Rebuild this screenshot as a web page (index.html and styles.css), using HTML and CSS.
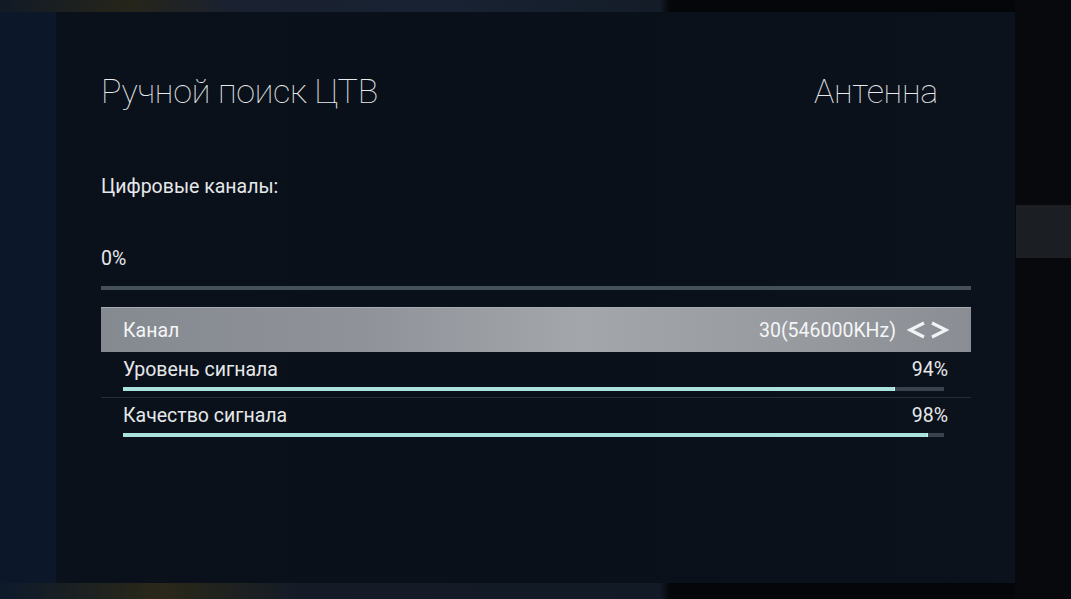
FILE: index.html
```html
<!DOCTYPE html>
<html lang="ru">
<head>
    <meta charset="UTF-8">
    <meta name="viewport" content="width=device-width, initial-scale=1.0">
    <title>Ручной поиск ЦТВ</title>
    <link rel="stylesheet" href="styles.css">
</head>
<body>
    <div class="screen">
        <div class="search-panel">
            <div class="panel-header">
                <h1>Ручной поиск ЦТВ</h1>
                <span class="source">Антенна</span>
            </div>

            <div class="found-label">Цифровые каналы:</div>
            <div class="scan-percent">0%</div>
            <div class="scan-line"></div>

            <!-- Selected row -->
            <div class="row row-selected">
                <span class="row-name">Канал</span>
                <span class="row-value">30(546000KHz)</span>
                <svg class="arrows" width="42" height="18" viewBox="0 0 42 18">
                    <polyline points="17,2 3,9 17,16" fill="none" stroke="#f2f3f4" stroke-width="3.2" stroke-linejoin="miter"/>
                    <polyline points="25,2 39,9 25,16" fill="none" stroke="#f2f3f4" stroke-width="3.2" stroke-linejoin="miter"/>
                </svg>
            </div>

            <div class="row row-meter">
                <div class="meter-head">
                    <span>Уровень сигнала</span>
                    <span>94%</span>
                </div>
                <div class="meter-track"><div class="meter-fill" style="width: 94%"></div></div>
            </div>

            <div class="row row-meter no-line">
                <div class="meter-head">
                    <span>Качество сигнала</span>
                    <span>98%</span>
                </div>
                <div class="meter-track"><div class="meter-fill" style="width: 98%"></div></div>
            </div>
        </div>
    </div>
</body>
</html>
```

FILE: styles.css
```css
/* Dark TV background behind the menu */
body {
    margin: 0;
    padding: 0;
    font-family: Roboto, 'Liberation Sans', sans-serif;
    color: #e6e8ea;
    background:
        linear-gradient(#1b1e23, #1b1e23) right 0 top 205px / 55px 53px no-repeat,
        linear-gradient(#08090c, #08090c) right 0 top 0 / 56px 100% no-repeat,
        linear-gradient(90deg, #111a26 0, #26251a 130px, #1a2130 230px, #182232 450px, #141c28 660px, #050609 670px) left 0 top 0 / 100% 12px no-repeat,
        linear-gradient(90deg, #0d1a2b 0, #2a2818 160px, #141b27 300px, #121a26 660px, #050609 670px) left 0 bottom 0 / 100% 16px no-repeat,
        #0c1829;
    overflow: hidden;
}

.screen {
    width: 1071px;
    height: 599px;
    padding: 12px 56px 16px 56px;
    box-sizing: border-box;
}

/* Main panel */
.search-panel {
    height: 100%;
    box-sizing: border-box;
    padding: 59px 44px 0 45px;
    background: linear-gradient(90deg, #0a111b, #09101a 50%, #0b121c);
    display: flex;
    flex-direction: column;
}

.panel-header {
    display: flex;
    justify-content: space-between;
    align-items: baseline;
    padding-right: 33px;
}

.panel-header h1,
.panel-header .source {
    margin: 0;
    font-size: 34px;
    line-height: 40px;
    font-weight: 100;
    letter-spacing: -0.25px;
    color: #e8eaec;
}

.found-label {
    margin-top: 64px;
    font-size: 19.5px;
    line-height: 24px;
}

.scan-percent {
    margin-top: 48px;
    font-size: 19.5px;
    line-height: 24px;
}

.scan-line {
    margin-top: 15px;
    height: 4px;
    background: #46505b;
}

/* Settings rows */
.row {
    padding: 0 23px 0 22px;
    font-size: 19.5px;
}

.row-selected {
    margin-top: 17px;
    height: 45px;
    box-sizing: border-box;
    display: flex;
    align-items: center;
    color: #f4f5f6;
    border-top: 1px solid #a9adb2;
    background: linear-gradient(90deg, #858a90, #8f9399 30%, #a3a7ac 55%, #979ba0 80%, #8a8e94);
}

.row-name {
    flex: 1;
}

.arrows {
    margin-left: 11px;
    margin-right: -1px;
}

.row-meter {
    padding-top: 7px;
    padding-bottom: 6px;
    border-bottom: 1px solid #252d36;
}

.row-meter.no-line {
    border-bottom: none;
}

.meter-head {
    display: flex;
    justify-content: space-between;
    line-height: 22px;
}

.meter-track {
    margin-top: 6px;
    margin-right: 4px;
    height: 4px;
    background: #38434e;
}

.meter-fill {
    height: 100%;
    background: #a9e2df;
    border-right: 1px solid #c8f4f2;
    box-sizing: border-box;
}
```
